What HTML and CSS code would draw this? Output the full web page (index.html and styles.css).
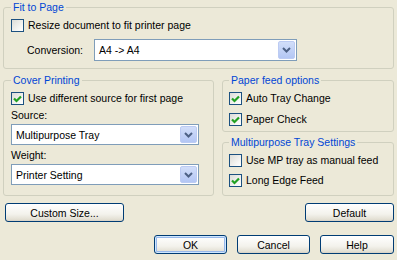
FILE: index.html
```html
<!DOCTYPE html>
<html>
<head>
    <title>Paper Options</title>
    <meta charset="utf-8">
    <link rel="stylesheet" href="styles.css">
</head>
<body>
    <div class="dialog">
        <fieldset class="group group-fit">
            <legend>Fit to Page</legend>
            <div class="check first">
                <span class="box"></span>
                <span>Resize document to fit printer page</span>
            </div>
            <div class="field-row">
                <span class="field-label">Conversion:</span>
                <div class="combo combo-wide">
                    <span class="combo-text">A4 -&gt; A4</span>
                    <span class="drop"><svg width="9" height="6" viewBox="0 0 9 6"><path d="M1 1 L4.5 4.5 L8 1" fill="none" stroke="#4d6185" stroke-width="2"/></svg></span>
                </div>
            </div>
        </fieldset>

        <div class="columns">
            <fieldset class="group group-cover">
                <legend>Cover Printing</legend>
                <div class="check first">
                    <span class="box checked"><svg width="9" height="8" viewBox="0 0 9 8"><path d="M1 3.5 L3.5 6 L8 1.5" fill="none" stroke="#21a121" stroke-width="2.2"/></svg></span>
                    <span>Use different source for first page</span>
                </div>
                <div class="caption caption-source">Source:</div>
                <div class="combo combo-cover">
                    <span class="combo-text">Multipurpose Tray</span>
                    <span class="drop"><svg width="9" height="6" viewBox="0 0 9 6"><path d="M1 1 L4.5 4.5 L8 1" fill="none" stroke="#4d6185" stroke-width="2"/></svg></span>
                </div>
                <div class="caption">Weight:</div>
                <div class="combo combo-cover combo-last">
                    <span class="combo-text">Printer Setting</span>
                    <span class="drop"><svg width="9" height="6" viewBox="0 0 9 6"><path d="M1 1 L4.5 4.5 L8 1" fill="none" stroke="#4d6185" stroke-width="2"/></svg></span>
                </div>
            </fieldset>

            <div class="side">
                <fieldset class="group group-feed">
                    <legend>Paper feed options</legend>
                    <div class="check first">
                        <span class="box checked"><svg width="9" height="8" viewBox="0 0 9 8"><path d="M1 3.5 L3.5 6 L8 1.5" fill="none" stroke="#21a121" stroke-width="2.2"/></svg></span>
                        <span>Auto Tray Change</span>
                    </div>
                    <div class="check next">
                        <span class="box checked"><svg width="9" height="8" viewBox="0 0 9 8"><path d="M1 3.5 L3.5 6 L8 1.5" fill="none" stroke="#21a121" stroke-width="2.2"/></svg></span>
                        <span>Paper Check</span>
                    </div>
                </fieldset>
                <fieldset class="group group-mp">
                    <legend>Multipurpose Tray Settings</legend>
                    <div class="check first">
                        <span class="box"></span>
                        <span>Use MP tray as manual feed</span>
                    </div>
                    <div class="check next-mp">
                        <span class="box checked"><svg width="9" height="8" viewBox="0 0 9 8"><path d="M1 3.5 L3.5 6 L8 1.5" fill="none" stroke="#21a121" stroke-width="2.2"/></svg></span>
                        <span>Long Edge Feed</span>
                    </div>
                </fieldset>
            </div>
        </div>

        <div class="button-row">
            <button class="btn btn-custom">Custom Size...</button>
            <button class="btn btn-default-set">Default</button>
        </div>
        <div class="button-row button-row-end">
            <button class="btn btn-main btn-focus">OK</button>
            <button class="btn btn-main">Cancel</button>
            <button class="btn btn-main btn-help">Help</button>
        </div>
    </div>
</body>
</html>
```

FILE: styles.css
```css
body {
    margin: 0;
    background-color: #ece9d8;
    font-family: "Liberation Sans", Arial, sans-serif;
    font-size: 10.5px;
    color: #000;
}
.dialog {
    width: 397px;
    height: 260px;
    box-sizing: border-box;
    padding: 1px 3px 0 3px;
    overflow: hidden;
}
.group {
    margin: 0;
    border: 1px solid #d0d0bf;
    border-radius: 3px;
    padding: 0 7px;
    min-width: 0;
}
.group legend {
    color: #0046d5;
    padding: 0 2px;
    line-height: 13px;
    height: 13px;
}
.group-fit {
    padding-bottom: 7px;
}
.check {
    display: flex;
    align-items: center;
    height: 13px;
    line-height: 13px;
}
.check.first {
    margin-top: 5px;
}
.check.next {
    margin-top: 8px;
}
.check.next-mp {
    margin-top: 7px;
}
.box {
    width: 11px;
    height: 11px;
    border: 1px solid #1c5180;
    background: linear-gradient(135deg, #dcdcd7, #f6f6f4 70%, #fff);
    margin-right: 4px;
    display: flex;
    align-items: center;
    justify-content: center;
    flex-shrink: 0;
}
.field-row {
    display: flex;
    align-items: center;
    margin-top: 7px;
}
.field-label {
    width: 67px;
    padding-left: 16px;
}
.combo {
    display: flex;
    align-items: stretch;
    height: 21px;
    box-sizing: border-box;
    border: 1px solid #7f9db9;
    background-color: #fff;
    padding: 1px;
}
.combo-text {
    flex-grow: 1;
    padding-left: 3px;
    line-height: 19px;
}
.drop {
    width: 15px;
    border: 1px solid #bccbf3;
    border-radius: 2px;
    background: linear-gradient(#d2def9, #b3c6f4);
    display: flex;
    align-items: center;
    justify-content: center;
}
.combo-wide {
    width: 203px;
    height: 22px;
}
.columns {
    display: flex;
    gap: 8px;
    margin-top: 5px;
}
.group-cover {
    width: 211px;
    box-sizing: border-box;
    padding-bottom: 9px;
}
.caption {
    line-height: 13px;
    margin-top: 4px;
}
.combo-cover {
    width: 188px;
    margin-top: 2px;
}
.side {
    width: 172px;
    display: flex;
    flex-direction: column;
}
.side .group {
    padding: 0 6px;
}
.group-feed {
    padding-bottom: 5px !important;
}
.group-mp {
    margin-top: 4px;
    padding-bottom: 8px !important;
}
.button-row {
    display: flex;
    justify-content: space-between;
    margin-top: 7px;
}
.button-row-end {
    justify-content: flex-end;
    gap: 10px;
    margin-top: 13px;
}
.btn {
    height: 19px;
    border: 1px solid #003c74;
    border-radius: 3px;
    background: linear-gradient(#ffffff, #f3f2ec 60%, #e3e0d4 90%, #d6d0c5);
    font-family: "Liberation Sans", Arial, sans-serif;
    font-size: 10.5px;
    color: #000;
    padding: 0;
}
.btn-custom {
    width: 119px;
    margin-left: 2px;
}
.btn-default-set {
    width: 89px;
}
.btn-main {
    width: 73px;
}
.btn-help {
    width: 74px;
}
.btn-focus {
    box-shadow: inset 0 0 0 1px #cee7ff, inset 0 0 0 2px #98b8ea;
}
```
